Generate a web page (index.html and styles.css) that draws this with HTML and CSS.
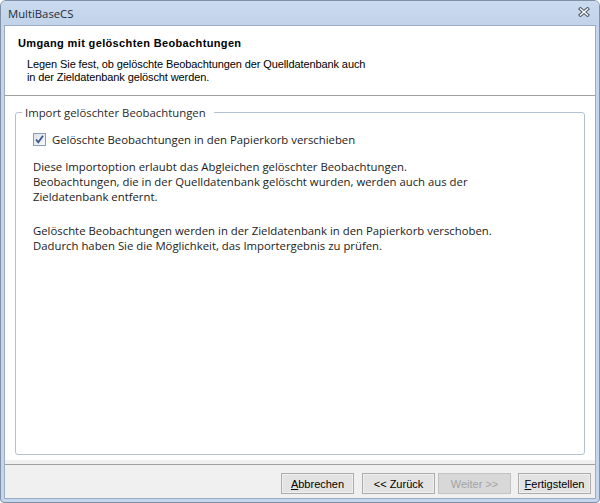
FILE: index.html
```html
<!DOCTYPE html>
<html lang="de">
    <head>
        <meta charset="UTF-8">
        <title>MultiBaseCS</title>
        <link rel="stylesheet" href="styles.css">
    </head>

    <body>
        <div class="window">
            <div class="titlebar">
                <span class="caption">MultiBaseCS</span>
                <svg class="close" width="12" height="10" viewBox="0 0 12 10">
                    <path d="M2.5 2 L9.5 8 M9.5 2 L2.5 8" stroke="#55606f" stroke-width="3.6" stroke-linecap="square" fill="none"/>
                    <path d="M2.5 2 L9.5 8 M9.5 2 L2.5 8" stroke="#ffffff" stroke-width="1.4" stroke-linecap="square" fill="none"/>
                </svg>
            </div>

            <div class="client">
                <div class="header">
                    <h1>Umgang mit gelöschten Beobachtungen</h1>
                    <p>Legen Sie fest, ob gelöschte Beobachtungen der Quelldatenbank auch<br>in der Zieldatenbank gelöscht werden.</p>
                </div>

                <div class="content">
                    <fieldset class="group">
                        <legend>Import gelöschter Beobachtungen</legend>
                        <label class="check">
                            <span class="box">
                                <svg width="11" height="11" viewBox="0 0 11 11">
                                    <path d="M2 5.5 L4.3 8.3 L9 1.8" stroke="#3d5590" stroke-width="1.8" fill="none"/>
                                </svg>
                            </span>
                            Gelöschte Beobachtungen in den Papierkorb verschieben
                        </label>
                        <p class="info">Diese Importoption erlaubt das Abgleichen gelöschter Beobachtungen.<br>Beobachtungen, die in der Quelldatenbank gelöscht wurden, werden auch aus der<br>Zieldatenbank entfernt.</p>
                        <p class="info second">Gelöschte Beobachtungen werden in der Zieldatenbank in den Papierkorb verschoben.<br>Dadurch haben Sie die Möglichkeit, das Importergebnis zu prüfen.</p>
                    </fieldset>
                </div>

                <div class="footer">
                    <div class="rule"></div>
                    <div class="buttons">
                        <button class="btn"><u>A</u>bbrechen</button>
                        <button class="btn back">&lt;&lt; Zurück</button>
                        <button class="btn next" disabled>Weiter &gt;&gt;</button>
                        <button class="btn finish"><u>F</u>ertigstellen</button>
                    </div>
                </div>
            </div>
        </div>
    </body>
</html>
```

FILE: styles.css
```css
body {
    margin: 0;
    padding: 0;
    background: #fff;
    font-family: "Liberation Sans", Arial, sans-serif;
    font-size: 11px;
    color: #000;
}

.window {
    width: 600px;
    height: 503px;
    box-sizing: border-box;
    border: 1px solid #8090a6;
    border-radius: 6px 6px 4px 4px;
    background: #c4d5ec;
    padding: 0 3px 3px 3px;
    display: flex;
    flex-direction: column;
}

.titlebar {
    height: 24px;
    display: flex;
    align-items: center;
    justify-content: space-between;
    background: linear-gradient(#cbdaee, #c1d3ea);
    margin: 0 -3px;
    padding-left: 7px;
    padding-right: 9px;
    border-radius: 5px 5px 0 0;
}

.caption {
    font-family: "Open Sans", "Noto Sans", sans-serif;
    font-size: 11.3px;
    color: #1f2b3b;
}

.close {
    display: block;
    margin-top: -2px;
}

.client {
    flex: 1;
    display: flex;
    flex-direction: column;
    background: #fff;
    border: 1px solid #9badc4;
}

.header {
    padding: 11px 0 11px 13px;
    border-bottom: 1px solid #a0a0a0;
}

.header h1 {
    margin: 0;
    font-size: 11px;
    line-height: 13px;
    font-weight: bold;
    letter-spacing: 0.36px;
}

.header p {
    margin: 8px 0 0 9px;
    line-height: 13px;
    letter-spacing: -0.1px;
}

.content {
    flex: 1;
    display: flex;
    flex-direction: column;
    padding: 9px 10px 5px 10px;
}

.group {
    flex: 1;
    margin: 0;
    padding: 12px 10px 0 17px;
    border: 1px solid #b3c0d1;
    border-radius: 3px;
    font-family: "Open Sans", "Noto Sans", sans-serif;
    font-size: 11.35px;
    line-height: 15px;
    color: #1b1b1b;
}

.group legend {
    padding: 0 8px 0 3px;
    margin-left: -11px;
    line-height: 15px;
    color: #2a2a2a;
}

.check {
    display: flex;
    align-items: center;
    gap: 6px;
}

.box {
    width: 11px;
    height: 11px;
    border: 1px solid #8c9db6;
    background: linear-gradient(135deg, #dde3ea, #f6f7f9);
    display: flex;
    align-items: center;
    justify-content: center;
}

.box svg {
    display: block;
}

.info {
    margin: 12px 0 0 0;
}

.info.second {
    margin-top: 19px;
}

.footer {
    background: #f0f0f0;
    padding: 4px 0 4px 0;
}

.rule {
    height: 1px;
    background: #a0a0a0;
}

.buttons {
    display: flex;
    justify-content: flex-end;
    padding: 8px 4px 0 0;
}

.btn {
    width: 73px;
    height: 21px;
    margin: 0;
    padding: 0;
    font-family: "Liberation Sans", Arial, sans-serif;
    font-size: 11px;
    color: #000;
    background: #e3e3e3;
    border: 1px solid #acacac;
    border-radius: 0;
    box-shadow: inset 0 0 0 1px #efefef;
}

.btn u {
    text-decoration: underline;
}

.back {
    margin-left: 8px;
}

.next {
    margin-left: 3px;
    background: #d8d8d8;
    color: #a3a3a3;
    border-color: #c2c2c2;
    box-shadow: none;
}

.finish {
    margin-left: 7px;
}
```
